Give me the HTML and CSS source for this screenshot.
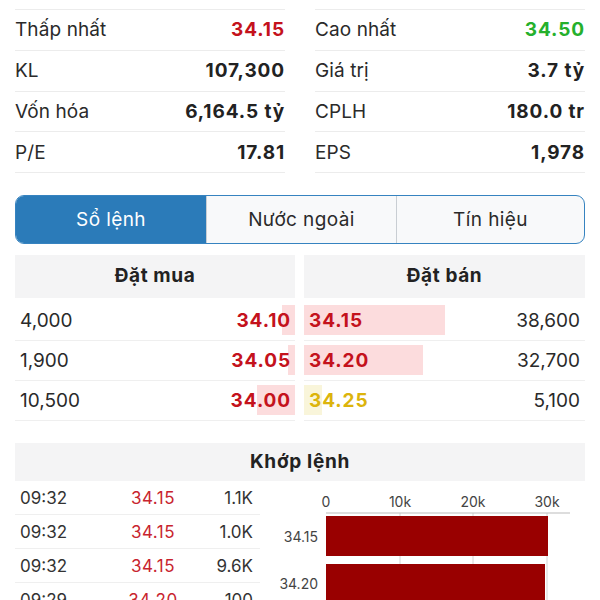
FILE: index.html
```html
<!DOCTYPE html>
<html lang="vi">
<head>
<meta charset="utf-8">
<link rel="stylesheet" href="styles.css">
</head>
<body>
<div class="page">
  <div class="stats">
    <div class="col">
      <div class="row"><span class="lbl">Thấp nhất</span><span class="val red">34.15</span></div>
      <div class="row"><span class="lbl">KL</span><span class="val">107,300</span></div>
      <div class="row"><span class="lbl">Vốn hóa</span><span class="val">6,164.5 tỷ</span></div>
      <div class="row"><span class="lbl">P/E</span><span class="val">17.81</span></div>
    </div>
    <div class="col">
      <div class="row"><span class="lbl">Cao nhất</span><span class="val green">34.50</span></div>
      <div class="row"><span class="lbl">Giá trị</span><span class="val">3.7 tỷ</span></div>
      <div class="row"><span class="lbl">CPLH</span><span class="val">180.0 tr</span></div>
      <div class="row"><span class="lbl">EPS</span><span class="val">1,978</span></div>
    </div>
  </div>

  <div class="tabs">
    <div class="tab active">Sổ lệnh</div>
    <div class="tab">Nước ngoài</div>
    <div class="tab">Tín hiệu</div>
  </div>

  <div class="book">
    <div class="side bid">
      <div class="head">Đặt mua</div>
      <div class="orow"><span class="qty">4,000</span><span class="px red"><i class="bar" style="width:13px"></i><b>34.10</b></span></div>
      <div class="orow"><span class="qty">1,900</span><span class="px red"><i class="bar" style="width:7px"></i><b>34.05</b></span></div>
      <div class="orow"><span class="qty">10,500</span><span class="px red"><i class="bar" style="width:38px"></i><b>34.00</b></span></div>
    </div>
    <div class="side ask">
      <div class="head">Đặt bán</div>
      <div class="orow"><span class="px red"><i class="bar" style="width:141px"></i><b>34.15</b></span><span class="qty">38,600</span></div>
      <div class="orow"><span class="px red"><i class="bar" style="width:119px"></i><b>34.20</b></span><span class="qty">32,700</span></div>
      <div class="orow"><span class="px yellow"><i class="bar" style="width:18px"></i><b>34.25</b></span><span class="qty">5,100</span></div>
    </div>
  </div>

  <div class="match">
    <div class="mhead">Khớp lệnh</div>
    <div class="mbody">
      <div class="trades">
        <div class="trow"><span>09:32</span><span class="tp">34.15</span><span class="tv">1.1K</span></div>
        <div class="trow"><span>09:32</span><span class="tp">34.15</span><span class="tv">1.0K</span></div>
        <div class="trow"><span>09:32</span><span class="tp">34.15</span><span class="tv">9.6K</span></div>
        <div class="trow"><span>09:29</span><span class="tp">34.20</span><span class="tv">100</span></div>
      </div>
      <svg class="chart" width="325" height="140" viewBox="0 0 325 140">
        <g class="ticklbl">
          <text x="66" y="26">0</text>
          <text x="140" y="26">10k</text>
          <text x="213" y="26">20k</text>
          <text x="287" y="26">30k</text>
        </g>
        <g class="grid">
          <line x1="140" y1="32" x2="140" y2="140"/>
          <line x1="213" y1="32" x2="213" y2="140"/>
          <line x1="287" y1="32" x2="287" y2="140"/>
        </g>
        <line class="axis" x1="66" y1="32" x2="310" y2="32"/>
        <rect class="barr" x="66" y="35" width="222" height="40"/>
        <rect class="barr" x="66" y="83" width="219" height="40"/>
        <g class="barlbl">
          <text x="58" y="61">34.15</text>
          <text x="58" y="108">34.20</text>
        </g>
      </svg>
    </div>
  </div>
</div>
</body>
</html>
```

FILE: styles.css
```css
* { box-sizing: border-box; }
html, body { margin: 0; padding: 0; background: #fff; }
body {
  font-family: Inter, "Noto Sans", "Liberation Sans", sans-serif;
  color: #222;
  -webkit-font-smoothing: antialiased;
}
.page { padding: 9px 15px 0; }

.stats {
  display: grid;
  grid-template-columns: 1fr 1fr;
  column-gap: 30px;
}
.col { border-bottom: 1px solid #ececec; }
.row {
  height: 40.75px;
  border-top: 1px solid #ececec;
  display: flex;
  align-items: center;
  justify-content: space-between;
  font-size: 19px;
}
.lbl { color: #2a2a2a; letter-spacing: 0.1px; }
.val { font-weight: 700; color: #222; letter-spacing: 0.9px; }
.red { color: #c4121c; }
.green { color: #25b02c; }
.yellow { color: #dcb40c; }

.tabs {
  margin-top: 22px;
  height: 49px;
  display: grid;
  grid-template-columns: 190px 190px 1fr;
  border: 1.5px solid #3683c0;
  border-radius: 9px;
  overflow: hidden;
  background: #f8f9fa;
}
.tab {
  display: flex;
  align-items: center;
  justify-content: center;
  font-size: 19px;
  letter-spacing: 0.4px;
  color: #2a2a2a;
  border-left: 1px solid #c9ced3;
}
.tab:first-child { border-left: none; }
.tab.active { background: #2b7bb9; color: #fff; }

.book {
  margin-top: 11px;
  display: grid;
  grid-template-columns: 280px 1fr;
  column-gap: 9px;
}
.head {
  height: 43px;
  background: #f4f4f5;
  display: flex;
  align-items: center;
  justify-content: center;
  font-weight: 700;
  font-size: 19px;
  letter-spacing: 0.6px;
  color: #222;
  margin-bottom: 3px;
  padding-bottom: 3px;
}
.orow {
  height: 40px;
  border-bottom: 1px solid #efefef;
  display: flex;
  align-items: center;
  justify-content: space-between;
  font-size: 19px;
}
.qty { color: #2a2a2a; }
.bid .qty { padding-left: 5px; }
.ask .qty { padding-right: 5px; }
.px {
  position: relative;
  align-self: stretch;
  display: flex;
  align-items: center;
  font-weight: 700;
}
.px b { position: relative; font-weight: 700; letter-spacing: 0.9px; }
.bid .px { padding-right: 4px; }
.ask .px { padding-left: 5px; }
.bar {
  position: absolute;
  top: 4px;
  bottom: 5px;
  background: #fcdcdd;
}
.bid .bar { right: 0; }
.ask .bar { left: 0; }
.yellow .bar { background: #f9f5da; }

.match { margin-top: 22px; }
.mhead {
  height: 38px;
  background: #f4f4f5;
  display: flex;
  align-items: center;
  justify-content: center;
  font-weight: 700;
  font-size: 19px;
  letter-spacing: 0.7px;
  padding-bottom: 2px;
}
.mbody {
  display: grid;
  grid-template-columns: 245px 1fr;
}
.trow {
  height: 34px;
  border-bottom: 1px solid #efefef;
  display: grid;
  grid-template-columns: 88px 90px 1fr;
  align-items: center;
  font-size: 17px;
  color: #333;
  padding: 0 7px 0 5px;
}
.tp { color: #c8242e; text-align: center; letter-spacing: 0.5px; }
.tv { text-align: right; }

.chart { display: block; font-family: Inter, "Noto Sans", sans-serif; }
.ticklbl text { font-size: 14px; fill: #444; text-anchor: middle; }
.barlbl text { font-size: 14px; fill: #444; text-anchor: end; }
.axis { stroke: #bbb; stroke-width: 1; }
.grid line { stroke: #d4d4d4; stroke-width: 1; }
.barr { fill: #990000; }
```
